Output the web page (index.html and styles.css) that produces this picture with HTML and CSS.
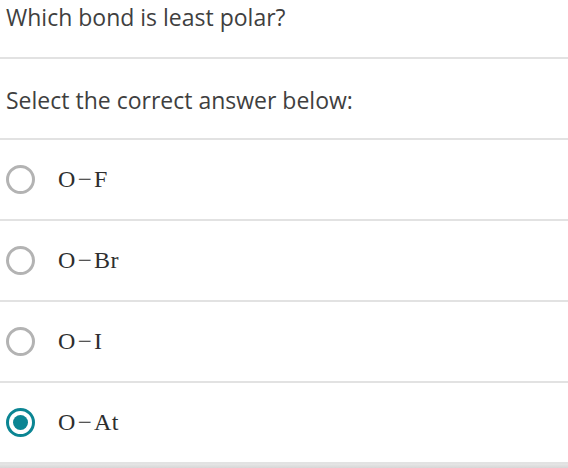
FILE: index.html
```html
<!DOCTYPE html>
<html>
<head>
<meta charset="utf-8">
<link rel="stylesheet" href="styles.css">
</head>
<body>
<div class="quiz">
  <div class="row question">Which bond is least polar?</div>
  <div class="row prompt">Select the correct answer below:</div>
  <div class="row option"><span class="radio"></span><span class="formula">O<span class="bond">−</span>F</span></div>
  <div class="row option"><span class="radio"></span><span class="formula">O<span class="bond">−</span>Br</span></div>
  <div class="row option"><span class="radio"></span><span class="formula">O<span class="bond">−</span>I</span></div>
  <div class="row option selected"><span class="radio"></span><span class="formula">O<span class="bond">−</span>At</span></div>
  <div class="bottom"></div>
</div>
</body>
</html>
```
FILE: styles.css
```css
html, body {
  margin: 0;
  padding: 0;
  background: #ffffff;
}
.quiz {
  width: 568px;
  font-family: "Open Sans", sans-serif;
  color: #3f3f3f;
}
.row {
  box-sizing: border-box;
  border-bottom: 2px solid #e2e2e2;
  display: flex;
  align-items: center;
  padding-left: 6px;
}
.question {
  height: 59px;
  font-size: 23px;
  align-items: flex-start;
  padding-top: 1px;
}
.prompt {
  height: 81px;
  font-size: 23px;
  padding-top: 2px;
}
.option {
  height: 81px;
}
.radio {
  box-sizing: border-box;
  width: 29px;
  height: 29px;
  border: 3px solid #b3b3b3;
  border-radius: 50%;
  flex: none;
  display: flex;
  align-items: center;
  justify-content: center;
}
.selected .radio {
  border-color: #0b8593;
}
.selected .radio::after {
  content: "";
  width: 15px;
  height: 15px;
  border-radius: 50%;
  background: #0b8593;
}
.formula {
  margin-left: 23px;
  font-family: "Liberation Serif", serif;
  font-size: 24px;
  color: #2e2e2e;
  letter-spacing: 0.5px;
}
.bond {
  display: inline-block;
  margin: 0 2px;
  transform: scaleX(1.05);
}
.bottom {
  height: 6px;
  background: linear-gradient(#e6e6e6, #cfcfcf);
}
```
